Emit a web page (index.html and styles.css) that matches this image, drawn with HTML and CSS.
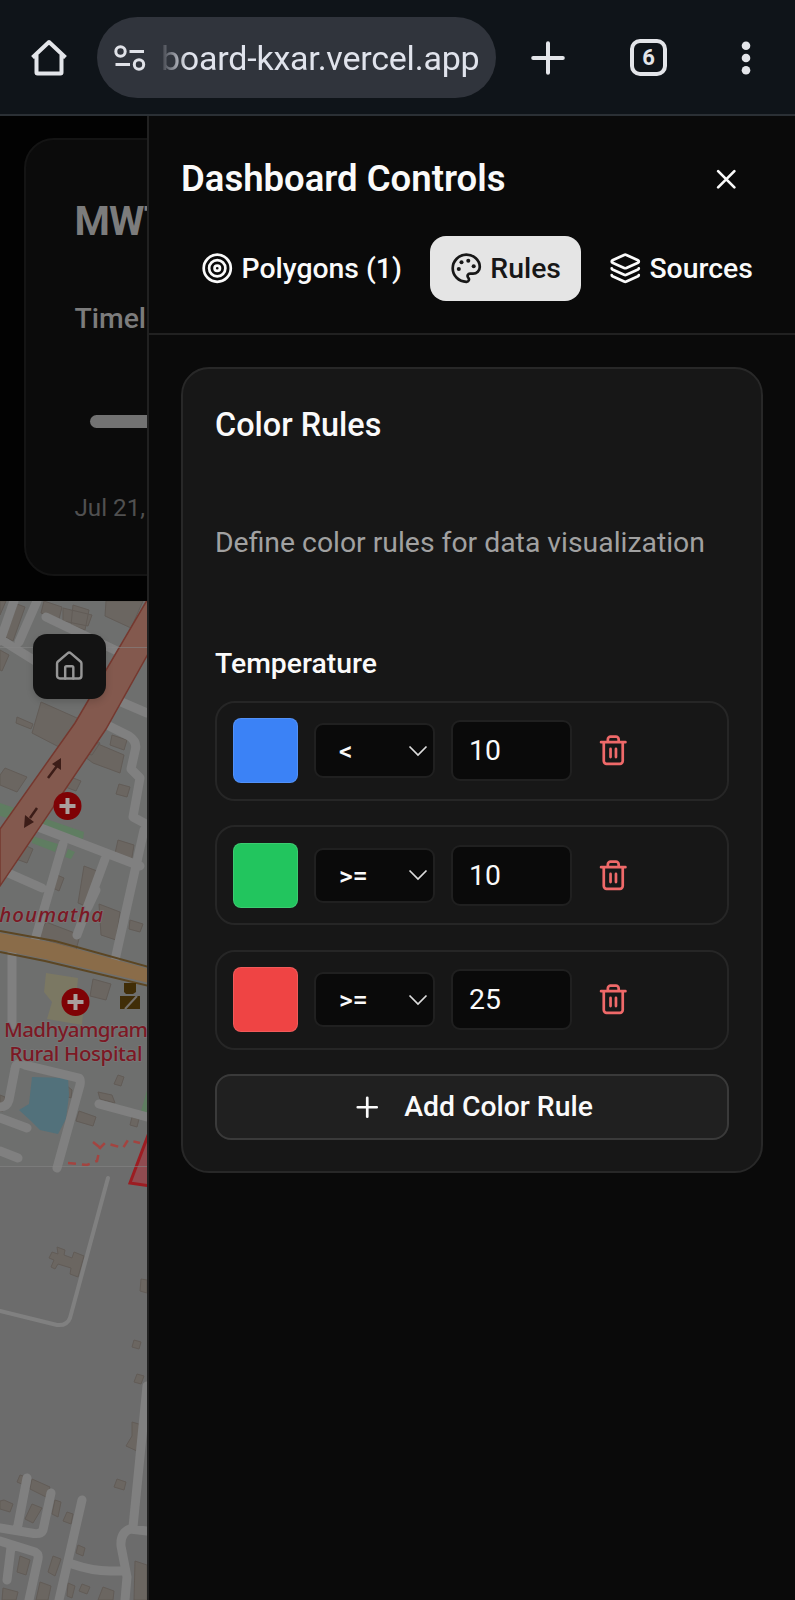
FILE: index.html
```
<!DOCTYPE html>
<html lang="en">
<head>
<meta charset="utf-8">
<title>Dashboard</title>
<link rel="stylesheet" href="styles.css">
</head>
<body>
<header class="browser">
  <svg class="browser-home" viewBox="0 0 38 38"><path d="M2.500 19.500 19 4 35.500 19.500M6.500 17V34.500a1 1 0 0 0 1 1H30.500a1 1 0 0 0 1-1V17" transform="translate(0 -1)"/></svg>
  <div class="address">
    <svg class="tune" viewBox="0 0 32 26"><circle cx="6.500" cy="6.500" r="4.700"/><circle cx="25" cy="19.500" r="4.700"/><path d="M15.500 6.500h14.500M1.500 19.500h14.500"/></svg>
    <span class="url">board-kxar.vercel.app</span>
  </div>
  <svg class="new-tab" viewBox="0 0 34 34"><path d="M17 2.200v29.600M2.200 17h29.600"/></svg>
  <div class="tab-count">6</div>
  <svg class="more" viewBox="0 0 10 34"><circle cx="5" cy="4.700" r="4.300"/><circle cx="5" cy="17" r="4.300"/><circle cx="5" cy="29.300" r="4.300"/></svg>
</header>

<div class="stage">
  <main class="backdrop">
    <section class="timeline">
      <h1 class="app-title">MWT</h1>
      <p class="timeline-label">Timeline</p>
      <div class="track"></div>
      <p class="date">Jul 21, 2025</p>
    </section>
    <div class="map">
      <svg class="tiles" viewBox="0 601 147 999">
        <rect class="land" x="0" y="601" width="147" height="565"/>
        <rect class="land-low" x="0" y="1166" width="147" height="434"/>
        <g class="building">
          <path d="M0 601h6l-6 14zM17 604l8 3-12 34-8-4zM44 601l18 6-3 12-18-6zM63 608l29 7-4 11-25-5zM73 605l16 5-4 20-14-5zM106 601h37l-12 27-26-12zM0 650l9 5-7 16-2-1zM17 717l16 7-2 5-15-6zM41 702l45 20-4 11 18 10-8 12-33-8-27-14zM5 768l22 9-10 15-17-7v-10zM63 774l18 7-5 10-16-6zM91 741l33 14-4 18-27-10-8-6zM112 735l15 5-3 10-14-5zM119 784l11 3-3 10-11-3zM118 840l16 5-3 18-17-5zM20 843l13 6-6 14-11-4zM84 866l13 5-9 36-10-4zM57 875l7 3-5 13-6-3zM46 922l34 13-4 15-38-13zM99 904l21 8-4 28-15-5zM130 920l13 4-3 8-11-3zM93 979l18 5-5 16-16-4zM0 1095l5 2-2 14H0zM67 1086l5 4-1 8-8-3zM118 1075l6 2-3 9-7-2zM98 1092l14 3 3 8-15-4zM79 1111l17 6-3 9-17-5zM132 1117l7 2-2 8-7-2zM57 1247l8 3-1 5 8 3 2-6 10 4-6 21-8-3 1-6-13-4-3 5-4-2 3-7-5-2 3-6 6 2zM141 1279l6 1v13l-7-2zM134 1340l7 2-2 7-7-2zM137 1374l7 2-3 8-7-2zM132 1422l10 3-5 26-11-5 6-10zM117 1479l9 3-2 8-10-3zM20 1475l6 2-2 8-7-3zM32 1479l18 8-4 10-16-8zM32 1504l10 4-9 15-8-4zM55 1500l6 2-3 15-6-3zM67 1512l6 2-2 10-8-3zM78 1545l7 3-2 8-7-3zM4 1500l9 4-3 8-10-3v-8zM53 1556l8 3-6 17-7-4zM20 1556l10 4-4 15-9-3zM103 1587l11 4-1 9H98zM135 1561l12 4v35h-13zM82 1584l8 3-3 7-8-3zM3 1588l15 4-2 8H2zM68 1583l7 3-3 12-5-2zM40 1582l11 4-3 14H36z"/>
        </g>
        <path class="park" d="M0 803 84 832l-1 7L0 816zM32 836l26 8-3 8-23-9zM68 849l7 3-4 7-6-2zM147 1090v25l-6-4z"/>
        <path class="school" d="M46 973l32 5-1 11 8 3-3 33-35-6 5-17-8-10z"/>
        <path class="water" d="M32 1077l36 1 1 17-3 24-8 15-18-4-9-9-12-11 10-6z"/>
        <g class="road">
          <path d="M14 601 0 641M37 601 19 642M0 639 40 664M46 617 117 651M119 701 147 713M105 724l24 12q9 6 6 15l-4 18 9 9-7 39 13 7M33 825 140 866M63 844 35 940M6 872 42 888M105 859 77 935M144 830 115 960M96 890l-8 17M12 952V1025M0 1107q7 0 9-7l6-31q1-8 10-4l54 13q2 1 1 7L57 1168M0 1118l27 10M0 1151l18 7M99 1104l48 13M147 1386 133 1527M27 1478 17 1530M51 1493 43 1530q-2 5-12 3L0 1528M0 1541l35 11q4 2 3 7l-9 41M82 1500 59 1600M72 1564q20 7 38 7h15M147 1531l-17-2q-10 4-9 17l6 31-2 23M11 1547 7 1580"/>
        </g>
        <path class="lane" d="M108 1178 70 1318q-3 8-13 7L0 1311"/>
        <path class="highway" d="M153 590V645L106 729 0 886V829L75 723z"/>
        <path class="trunk-edge" d="M0 931 55 941 149 967M0 952 45 961 149 986"/>
        <path class="trunk-fill" d="M0 933 55 943 149 969V983L45 959 0 950z"/>
        <path class="arrow" d="M48 778 57 766M37 808 30 818"/>
        <path class="arrow-head" d="M61 758v12l-9-6zM24 828l1-13 9 7z"/>
        <path class="footpath" d="M68 1163l19 2 10-4 3-13 5-5 18 5 5-8 12 3M93 1142l10 8"/>
        <path class="zone" d="M150 1130V1186L130 1183z"/>
        <g class="clinic"><circle cx="67.500" cy="806" r="14"/><circle cx="75.500" cy="1002" r="14"/><path d="M67.500 798v16M59.500 806h16M75.500 994v16M67.500 1002h16"/></g>
        <path class="station" d="M124 983h12v9l-3 2h-7l-2-2zM120 996h20v13h-20z"/>
        <path class="sash" d="M125 1009 137 996"/>
        <path class="seam" d="M0 647.500h147M0 1166.500h147"/>
        <text class="place place-town" x="-14" y="922" textLength="117">Choumatha</text>
        <text class="place" x="4" y="1037" textLength="144">Madhyamgram</text>
        <text class="place" x="9.500" y="1061" textLength="133">Rural Hospital</text>
      </svg>
      <button class="recenter" aria-label="Home"><svg class="icon" viewBox="0 0 24 24"><path d="M15 21v-8a1 1 0 0 0-1-1h-4a1 1 0 0 0-1 1v8"/><path d="M3 10a2 2 0 0 1 .709-1.528l7-6a2 2 0 0 1 2.582 0l7 6A2 2 0 0 1 21 10v9a2 2 0 0 1-2 2H5a2 2 0 0 1-2-2z"/></svg></button>
    </div>
  </main>

  <aside class="panel">
    <div class="panel-head">
      <div class="title-row">
        <h2 class="panel-title">Dashboard Controls</h2>
        <button class="close" aria-label="Close"><svg class="icon" viewBox="0 0 24 24"><path d="M18 6 6 18M6 6l12 12"/></svg></button>
      </div>
      <nav class="tabs">
        <button class="tab"><svg class="icon" viewBox="0 0 24 24"><circle cx="12" cy="12" r="10"/><circle cx="12" cy="12" r="6"/><circle cx="12" cy="12" r="2"/></svg><span>Polygons (1)</span></button>
        <button class="tab tab-active"><svg class="icon" viewBox="0 0 24 24"><path d="M12 22a1 1 0 0 1 0-20 10 9 0 0 1 10 9 5 5 0 0 1-5 5h-2.250a1.750 1.750 0 0 0-1.400 2.800l.3.4a1.750 1.750 0 0 1-1.400 2.800z"/><g class="dots"><circle cx="13.500" cy="6.500" r="1.500"/><circle cx="17.500" cy="10.500" r="1.500"/><circle cx="6.500" cy="12.500" r="1.500"/><circle cx="8.500" cy="7.500" r="1.500"/></g></svg><span>Rules</span></button>
        <button class="tab"><svg class="icon" viewBox="0 0 24 24"><path d="M12.830 2.180a2 2 0 0 0-1.660 0L2.600 6.080a1 1 0 0 0 0 1.830l8.580 3.910a2 2 0 0 0 1.660 0l8.580-3.900a1 1 0 0 0 0-1.830z"/><path d="M2 12a1 1 0 0 0 .58.91l8.600 3.910a2 2 0 0 0 1.650 0l8.580-3.900A1 1 0 0 0 22 12"/><path d="M2 17a1 1 0 0 0 .58.91l8.600 3.910a2 2 0 0 0 1.650 0l8.580-3.900A1 1 0 0 0 22 17"/></svg><span>Sources</span></button>
      </nav>
    </div>
    <section class="card">
      <h3 class="card-title">Color Rules</h3>
      <p class="card-text">Define color rules for data visualization</p>
      <h4 class="group">Temperature</h4>
      <div class="rules">
        <div class="rule">
          <span class="swatch swatch-blue"></span>
          <span class="select"><span>&lt;</span><svg class="chevron" viewBox="0 0 20 12"><path d="M1.500 1.500 10 10l8.500-8.500"/></svg></span>
          <span class="value">10</span>
          <button class="delete" aria-label="Delete"><svg class="icon" viewBox="0 0 24 24"><path d="M3 6h18M19 6v14c0 1-1 2-2 2H7c-1 0-2-1-2-2V6M8 6V4c0-1 1-2 2-2h4c1 0 2 1 2 2v2M10 11v6M14 11v6"/></svg></button>
        </div>
        <div class="rule">
          <span class="swatch swatch-green"></span>
          <span class="select"><span>&gt;=</span><svg class="chevron" viewBox="0 0 20 12"><path d="M1.500 1.500 10 10l8.500-8.500"/></svg></span>
          <span class="value">10</span>
          <button class="delete" aria-label="Delete"><svg class="icon" viewBox="0 0 24 24"><path d="M3 6h18M19 6v14c0 1-1 2-2 2H7c-1 0-2-1-2-2V6M8 6V4c0-1 1-2 2-2h4c1 0 2 1 2 2v2M10 11v6M14 11v6"/></svg></button>
        </div>
        <div class="rule">
          <span class="swatch swatch-red"></span>
          <span class="select"><span>&gt;=</span><svg class="chevron" viewBox="0 0 20 12"><path d="M1.500 1.500 10 10l8.500-8.500"/></svg></span>
          <span class="value">25</span>
          <button class="delete" aria-label="Delete"><svg class="icon" viewBox="0 0 24 24"><path d="M3 6h18M19 6v14c0 1-1 2-2 2H7c-1 0-2-1-2-2V6M8 6V4c0-1 1-2 2-2h4c1 0 2 1 2 2v2M10 11v6M14 11v6"/></svg></button>
        </div>
        <button class="add"><svg class="icon" viewBox="0 0 24 24"><path d="M5 12h14M12 5v14"/></svg><span>Add Color Rule</span></button>
      </div>
    </section>
  </aside>
</div>
</body>
</html>
```
FILE: styles.css
```
* { box-sizing: border-box; margin: 0; padding: 0; }
body {
  width: 795px; height: 1600px; overflow: hidden;
  display: flex; flex-direction: column;
  background: #0a0a0a; color: #fafafa;
  font-family: Roboto, "Liberation Sans", sans-serif; font-size: 28.350px;
}
button { background: none; border: 0; color: inherit; font: inherit; }
svg { display: block; flex: none; }
.icon {
  width: 32.5px; height: 32.5px; fill: none; stroke: currentColor;
  stroke-width: 2; stroke-linecap: round; stroke-linejoin: round;
}

/* Browser bar */
.browser {
  flex: none; height: 116px; padding: 1px 0 0 29.500px;
  display: flex; align-items: center;
  background: #0f1419; border-bottom: 2px solid #2b3035;
}
.browser-home { width: 38px; height: 38px; fill: none; stroke: #e3e5e9; stroke-width: 4; stroke-linejoin: round; }
.address {
  width: 399px; height: 81px; margin-left: 29px; padding-left: 17px; border-radius: 41px;
  display: flex; align-items: center; background: #30343c;
}
.tune { width: 32px; height: 26px; fill: none; stroke: #e0e2e8; stroke-width: 3; }
.url {
  margin-left: 15.500px; white-space: nowrap; color: #e0e3ec;
  font-size: 34px; line-height: 48px; letter-spacing: -.22px;
  -webkit-mask-image: linear-gradient(90deg, rgba(0,0,0,.08), #000 26px);
  mask-image: linear-gradient(90deg, rgba(0,0,0,.08), #000 26px);
}
.new-tab { width: 34px; height: 34px; margin-left: 35px; fill: none; stroke: #e3e5e9; stroke-width: 4; stroke-linecap: round; }
.tab-count {
  width: 37px; height: 37px; margin-left: 65.500px; border: 4px solid #e3e5e9; border-radius: 10px;
  color: #e3e5e9; font-size: 22px; font-weight: 700; line-height: 29px; text-align: center;
}
.more { width: 10px; height: 34px; margin-left: 73.500px; fill: #e3e5e9; }

/* Layout */
.stage { flex: 1; min-height: 0; display: grid; grid-template-columns: 147px 648px; }
.backdrop { overflow: hidden; display: flex; flex-direction: column; background: #020202; padding-top: 22px; }

/* Dimmed page */
.timeline {
  flex: none; width: 740px; height: 438px; margin-left: 24px; padding: 60.500px 49px 0 48.500px;
  border: 2px solid #141414; border-radius: 30px; background: #0b0b0b;
}
.app-title { font-size: 40.500px; font-weight: 700; line-height: 40px; letter-spacing: -1px; color: #7c7c7c; white-space: nowrap; }
.timeline-label { margin-top: 57px; font-weight: 500; line-height: 41px; color: #7c7c7c; }
.track { height: 13px; margin: 76.500px 0 0 15.500px; border-radius: 7px; background: #727272; }
.date { margin-top: 63.500px; font-size: 24.200px; line-height: 33px; color: #505050; }
.map { flex: 1; min-height: 0; margin-top: 25px; position: relative; }
.tiles { width: 147px; height: 999px; }
.recenter {
  position: absolute; left: 32.500px; top: 33px; width: 73px; height: 65px; border-radius: 14px;
  display: grid; place-items: center; background: #131313; color: #969696;
  box-shadow: 0 3px 7px rgba(0,0,0,.15);
}
.recenter .icon { stroke-width: 1.800; }

/* Map */
.land { fill: #6e6f6e; }
.land-low { fill: #6c6c6c; }
.building { fill: #6b6661; stroke: #625c57; stroke-width: 1; }
.park { fill: #5f7d61; }
.school { fill: #7b7863; }
.water { fill: #52717b; }
.road { fill: none; stroke: #808080; stroke-width: 9; stroke-linecap: round; stroke-linejoin: round; }
.lane { fill: none; stroke: #808080; stroke-width: 4; stroke-linecap: round; }
.highway { fill: #83594e; stroke: #75382f; stroke-width: 1.500; }
.trunk-edge { fill: none; stroke: #5c4623; stroke-width: 2; }
.trunk-fill { fill: #8a6c49; }
.arrow { fill: none; stroke: #3c1d18; stroke-width: 2.500; }
.arrow-head { fill: #3c1d18; }
.footpath { fill: none; stroke: #a34440; stroke-width: 2.500; stroke-dasharray: 8 6; }
.zone { fill: #904b50; stroke: #9c1d22; stroke-width: 3; }
.clinic circle { fill: #7f0205; }
.clinic path { fill: none; stroke: #a9a09e; stroke-width: 4; }
.station { fill: #402d07; }
.sash { stroke: #74706a; stroke-width: 2; }
.seam { stroke: #858585; stroke-width: 1; opacity: .6; }
.place {
  fill: #7c1824; stroke: #777; stroke-width: 1.500; paint-order: stroke;
  font-family: "Noto Sans", sans-serif; font-size: 20.500px; font-weight: 500;
}
.place-town { font-style: italic; }

/* Panel */
.panel { background: #0a0a0a; border-left: 2px solid #212121; }
.panel-head { padding: 30.500px 32px 32px; border-bottom: 2px solid #212121; height: 218.500px; }
.title-row { display: flex; justify-content: space-between; align-items: center; height: 65px; }
.panel-title { font-size: 36.500px; font-weight: 600; line-height: 44px; white-space: nowrap; }
.close { width: 73px; height: 65px; display: grid; place-items: center; }
.tabs { display: flex; gap: 8px; margin-top: 24.500px; }
.tab {
  flex: none; height: 65px; padding: 0 20px; border-radius: 16px;
  display: flex; align-items: center; gap: 8px; font-weight: 500; white-space: nowrap;
}
.tab-active { background: #e5e5e5; color: #171717; }
.dots { fill: currentColor; stroke: none; }

.card {
  width: 582px; height: 806px; margin: 32px 0 0 32px; padding: 40.500px 32px 0;
  border: 2px solid #282828; border-radius: 28px; background: #171717;
}
.card-title { font-size: 32.400px; font-weight: 500; line-height: 33px; }
.card-text { margin-top: 79.500px; line-height: 41px; color: #a1a1a1; white-space: nowrap; }
.group { margin-top: 80.500px; font-size: 28.350px; font-weight: 500; line-height: 41px; }
.rules { display: flex; flex-direction: column; gap: 24.500px; margin-top: 16.500px; }
.rule {
  height: 100px; padding: 0 15.500px; display: flex; align-items: center; gap: 16px;
  border: 2px solid #262626; border-radius: 20px;
}
.swatch { width: 65px; height: 65px; border-radius: 8px; border: 1px solid rgba(255,255,255,.12); }
.swatch-blue { background: #3b82f6; }
.swatch-green { background: #22c55e; }
.swatch-red { background: #ef4444; }
.select, .value {
  width: 121px; display: flex; align-items: center; border: 2px solid #202020; border-radius: 9px; background: #0a0a0a;
}
.select { height: 55px; padding: 0 5px 0 23.500px; justify-content: space-between; font-size: 26.500px; font-weight: 500; }
.chevron { width: 20px; height: 12px; fill: none; stroke: #ddd; stroke-width: 1.700; }
.value { height: 61px; padding-left: 16.500px; }
.delete { height: 65px; width: 51px; display: grid; place-items: center; color: #ef6969; }
.add {
  height: 65.500px; display: flex; align-items: center; justify-content: center; gap: 20.500px;
  border: 2px solid #3a3a3a; border-radius: 16px; background: #202020; font-weight: 500;
}
```
